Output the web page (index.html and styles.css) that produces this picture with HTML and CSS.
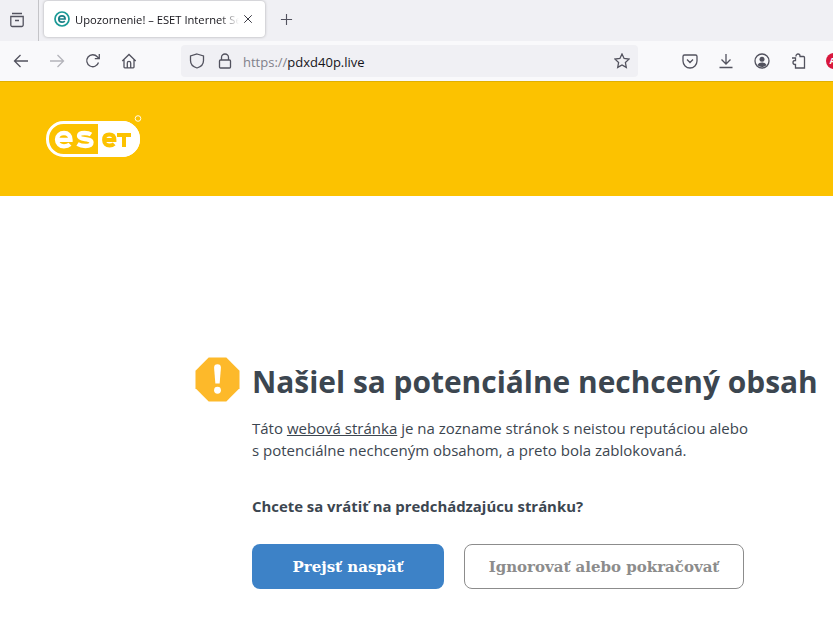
FILE: index.html
```html
<!DOCTYPE html>
<html lang="sk">
<head>
    <meta charset="UTF-8">
    <title>Upozornenie! – ESET Internet Security</title>
    <link rel="stylesheet" href="styles.css">
</head>
<body>
    <div class="tab-bar">
        <span class="tab-side">
            <svg class="icon" viewBox="0 0 16 16"><path d="M3 1.500h10M1.800 4.500h12.400v8.500a1.500 1.500 0 0 1-1.500 1.500H3.300a1.500 1.500 0 0 1-1.500-1.500zM6 8.500h4"/></svg>
        </span>
        <div class="tab">
            <svg class="favicon" viewBox="0 0 16 16"><circle cx="8" cy="8" r="7" fill="#fff" stroke="#1a9a96" stroke-width="1.700"/><path d="M4.800 8h6.300c0-2-1.300-3.200-3.100-3.200S4.800 6 4.800 8s1.300 3.200 3.200 3.200c1.200 0 2.100-.4 2.800-1.100" fill="none" stroke="#1b7f86" stroke-width="1.700"/></svg>
            <span class="tab-title">Upozornenie! – ESET Internet Security</span>
            <svg class="tab-close" viewBox="0 0 12 12"><path d="M1.500 1.500l9 9M10.500 1.500l-9 9"/></svg>
        </div>
        <svg class="new-tab" viewBox="0 0 14 14"><path d="M7 1v12M1 7h12"/></svg>
    </div>

    <div class="nav-bar">
        <div class="nav-left">
            <svg class="icon" viewBox="0 0 16 16"><path d="M15 8H1.500M7.500 2l-6 6 6 6"/></svg>
            <svg class="icon icon-off" viewBox="0 0 16 16"><path d="M1 8h13.500M8.500 2l6 6-6 6"/></svg>
            <svg class="icon" viewBox="0 0 16 16"><path d="M13.500 9.500A6 6 0 1 1 12.300 3.800L14 5.500M14.300 1v4.700H9.800"/></svg>
            <svg class="icon" viewBox="0 0 16 16"><path d="M1.300 8L8 1.500 14.700 8M3 6.500V14a.8.8 0 0 0 .8.800h8.400A.8.8 0 0 0 13 14V6.500M6.300 14.500V10a1.700 1.700 0 0 1 3.400 0v4.500"/></svg>
        </div>
        <div class="url-bar">
            <svg class="icon" viewBox="0 0 16 16"><path d="M8 1l6.500 2v4.500c0 4-3 6.500-6.500 7.500-3.500-1-6.500-3.500-6.500-7.500V3z"/></svg>
            <svg class="icon" viewBox="0 0 16 16"><path d="M4.500 7V4.500a3.500 3.500 0 0 1 7 0V7M3.500 7h9a1 1 0 0 1 1 1v6a1 1 0 0 1-1 1h-9a1 1 0 0 1-1-1V8a1 1 0 0 1 1-1z"/></svg>
            <span class="url"><span class="url-scheme">https://</span>pdxd40p.live</span>
            <svg class="icon url-star" viewBox="0 0 16 16"><path d="M8 1l2.100 4.500 4.900.6-3.600 3.400.9 4.900L8 12l-4.300 2.400.9-4.900L1 6.100l4.900-.6z"/></svg>
        </div>
        <div class="nav-right">
            <svg class="icon" viewBox="0 0 16 16"><path d="M2.500 2h11A1.500 1.500 0 0 1 15 3.500V8a7 7 0 0 1-14 0V3.500A1.500 1.500 0 0 1 2.500 2zM5 6.500l3 3 3-3"/></svg>
            <svg class="icon" viewBox="0 0 16 16"><path d="M8 1v10M3.500 6.500L8 11l4.500-4.500M1.500 14.500h13"/></svg>
            <svg class="icon" viewBox="0 0 16 16"><circle cx="8" cy="8" r="7"/><circle class="solid" cx="8" cy="6.200" r="2.500"/><path class="solid" d="M3.500 12c.8-1.700 2.500-2.500 4.500-2.500s3.700.8 4.500 2.500c-1 1.200-2.700 2-4.500 2s-3.500-.8-4.500-2z"/></svg>
            <svg class="icon" viewBox="0 0 16 16"><path d="M6 3.500V3a2 2 0 0 1 4 0v.5h3.500a1 1 0 0 1 1 1V15H5.500v-3.500H5a2 2 0 0 1 0-4h.5V5H2"/></svg>
            <span class="addon-badge">AI</span>
        </div>
    </div>

    <header class="banner">
        <svg class="logo" viewBox="0 0 97 42">
            <rect x="2.500" y="7.500" width="91" height="33" rx="16" fill="#fcc200" stroke="#fff" stroke-width="3"/>
            <path d="M53 6h24a18 18 0 0 1 0 36H53z" fill="#fff"/>
            <path d="M12.500 24.800h13c0-4.300-2.500-6.800-6.500-6.800s-7 2.500-7 6.500 3 6.800 7 6.800c2.500 0 4.500-.6 6-2" fill="none" stroke="#fff" stroke-width="4.300"/>
            <path d="M46 19.500c-1.500-1-3.500-1.500-6.500-1.500-3.500 0-5.500 1-5.500 3 0 4.500 12.500 1.500 12.500 6.500 0 2.500-2.500 3.500-6 3.500-3 0-5.500-.5-8-2" fill="none" stroke="#fff" stroke-width="4.300"/>
            <path d="M59 25h10.500c0-3.500-2-5.500-5.200-5.500S59 21.500 59 25s2.200 5.500 5.500 5.500c2 0 3.500-.5 4.700-1.700" fill="none" stroke="#fcc200" stroke-width="3.800"/>
            <path d="M72 20h14M79 20v12" fill="none" stroke="#fcc200" stroke-width="4"/>
            <circle cx="93" cy="3.500" r="2.800" fill="none" stroke="#fff" stroke-width=".9"/>
        </svg>
    </header>

    <main class="warning">
        <div class="warning-title">
            <svg class="warning-icon" viewBox="0 0 46 46">
                <path d="M14 0.500h18L45.500 14v18L32 45.500H14L0.500 32V14z" fill="#fdb92a"/>
                <path d="M19.500 11a3.500 3.500 0 0 1 7 0l-1.300 16h-4.400z" fill="#fff"/>
                <circle cx="23" cy="34" r="3.500" fill="#fff"/>
            </svg>
            <h1>Našiel sa potenciálne nechcený obsah</h1>
        </div>
        <div class="warning-body">
            <p class="warning-text">Táto <a href="#">webová stránka</a> je na zozname stránok s neistou reputáciou alebo<br>s potenciálne nechceným obsahom, a preto bola zablokovaná.</p>
            <p class="warning-question">Chcete sa vrátiť na predchádzajúcu stránku?</p>
            <div class="warning-actions">
                <button class="btn btn-back">Prejsť naspäť</button>
                <button class="btn btn-ignore">Ignorovať alebo pokračovať</button>
            </div>
        </div>
    </main>
</body>
</html>
```

FILE: styles.css
```css
html, body {
    margin: 0;
    padding: 0;
    height: 100%;
    overflow: hidden;
}

body {
    font-family: "Open Sans", "Noto Sans", sans-serif;
    background-color: #fff;
    color: #3c4650;
    width: 833px;
}

svg {
    display: block;
    flex: none;
}

.icon {
    width: 16px;
    height: 16px;
    fill: none;
    stroke: #52525e;
    stroke-width: 1.300;
}

.icon .solid {
    fill: #52525e;
    stroke: none;
}

.icon-off {
    stroke: #b4b4ba;
}

/* tab strip */
.tab-bar {
    height: 41px;
    background-color: #f0f0f4;
    display: flex;
    align-items: flex-start;
    box-sizing: border-box;
}

.tab-side {
    width: 39px;
    height: 41px;
    box-sizing: border-box;
    padding: 12px 0 0 9px;
    border-right: 1px solid #c4c4c8;
}

.tab {
    width: 221px;
    height: 36px;
    margin: 1px 0 0 5px;
    box-sizing: border-box;
    padding: 0 12px 0 10px;
    background-color: #fff;
    border-radius: 4px;
    box-shadow: 0 0 3px rgba(0, 0, 0, 0.3);
    display: flex;
    align-items: center;
}

.favicon {
    width: 16px;
    height: 16px;
    margin-right: 5px;
}

.tab-title {
    flex: 1;
    font-size: 11.200px;
    color: #15141a;
    white-space: nowrap;
    overflow: hidden;
    -webkit-mask-image: linear-gradient(to right, #000 88%, transparent);
    mask-image: linear-gradient(to right, #000 88%, transparent);
}

.tab-close {
    width: 10px;
    height: 10px;
    margin-left: 4px;
    stroke: #3a3a44;
    stroke-width: 1.200;
    fill: none;
}

.new-tab {
    width: 13px;
    height: 13px;
    margin: 13px 0 0 15px;
    stroke: #52525e;
    stroke-width: 1.200;
    fill: none;
}

/* toolbar */
.nav-bar {
    height: 40px;
    background-color: #f9f9fb;
    display: flex;
    align-items: center;
    border-bottom: 1px solid #e0b000;
}

.nav-left {
    flex: none;
    display: flex;
    gap: 20px;
    padding-left: 13px;
    width: 181px;
    box-sizing: border-box;
}

.url-bar {
    flex: none;
    width: 457px;
    height: 32px;
    box-sizing: border-box;
    padding: 0 8px;
    background-color: #f0f0f4;
    border-radius: 4px;
    display: flex;
    align-items: center;
    gap: 12px;
}

.url {
    flex: 1;
    font-size: 13px;
    color: #15141a;
    margin: 1px 0 0 -2px;
}

.url-scheme {
    color: #80808a;
}

.nav-right {
    flex: none;
    display: flex;
    align-items: center;
    gap: 20px;
    padding-left: 44px;
}

.addon-badge {
    flex: none;
    width: 16px;
    height: 16px;
    border-radius: 50%;
    background-color: #d8173c;
    color: #fff;
    font-size: 9px;
    font-weight: 700;
    line-height: 16px;
    text-align: center;
}

/* yellow header */
.banner {
    height: 114px;
    background-color: #fcc200;
    padding: 33px 0 0 45px;
    box-sizing: border-box;
}

.logo {
    width: 97px;
    height: 42px;
}

/* warning content */
.warning {
    padding: 161px 0 0 195px;
}

.warning-title {
    display: flex;
    align-items: flex-start;
    gap: 12px;
    height: 46px;
}

.warning-icon {
    width: 45px;
    height: 45px;
}

.warning-title h1 {
    margin: 2px 0 0;
    font-size: 29.900px;
    font-weight: 700;
    line-height: 46px;
    white-space: nowrap;
    color: #3c4650;
}

.warning-body {
    padding-left: 57px;
}

.warning-text {
    margin: 14px 0 0;
    font-size: 15px;
    line-height: 22px;
    white-space: nowrap;
}

.warning-text a {
    color: inherit;
}

.warning-question {
    margin: 34px 0 0;
    font-size: 14.900px;
    font-weight: 700;
    line-height: 22px;
}

.warning-actions {
    display: flex;
    gap: 20px;
    margin-top: 27px;
}

.btn {
    height: 45px;
    border-radius: 8px;
    box-sizing: border-box;
    font-family: "DejaVu Serif", serif;
    font-size: 15px;
    font-weight: 700;
    padding: 0;
}

.btn-back {
    width: 192px;
    background-color: #3d82c7;
    border: none;
    color: #fff;
}

.btn-ignore {
    width: 280px;
    background-color: #fff;
    border: 1px solid #8c8c8c;
    color: #8c8c8c;
}
```
